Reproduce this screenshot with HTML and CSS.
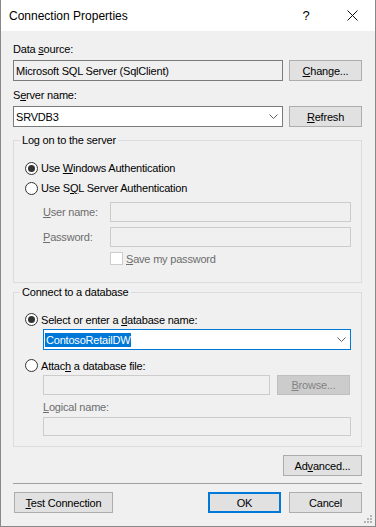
FILE: index.html
```html
<!DOCTYPE html>
<html lang="en">

<head>
    <meta charset="utf-8">
    <meta name="viewport" content="width=device-width, initial-scale=1.0">
    <title>Connection Properties</title>
    <link rel="stylesheet" href="styles.css">
</head>

<body>
    <div class="window">
        <div class="titlebar">
            <span class="title">Connection Properties</span>
            <span class="capbtn">?</span>
            <span class="capbtn">
                <svg width="11" height="11" viewBox="0 0 11 11">
                    <path d="M0.5 0.5 L10.5 10.5 M10.5 0.5 L0.5 10.5" stroke="#111" stroke-width="1" fill="none" />
                </svg>
            </span>
        </div>

        <div class="content">
            <label class="lbl">Data <u>s</u>ource:</label>
            <div class="row">
                <div class="textbox readonly">Microsoft SQL Server (SqlClient)</div>
                <button class="btn"><u>C</u>hange...</button>
            </div>

            <label class="lbl">S<u>e</u>rver name:</label>
            <div class="row">
                <div class="textbox combo">
                    <span class="value">SRVDB3</span>
                    <svg class="chev" width="9" height="5" viewBox="0 0 9 5">
                        <polyline points="0.5,0.5 4.5,4.5 8.5,0.5" stroke="#606060" fill="none" />
                    </svg>
                </div>
                <button class="btn"><u>R</u>efresh</button>
            </div>

            <fieldset class="group logon">
                <legend>Log on to the server</legend>
                <div class="opt first">
                    <span class="radio on"></span>
                    <span>Use <u>W</u>indows Authentication</span>
                </div>
                <div class="opt">
                    <span class="radio"></span>
                    <span>Use S<u>Q</u>L Server Authentication</span>
                </div>
                <div class="field">
                    <label class="dim"><u>U</u>ser name:</label>
                    <div class="textbox off"></div>
                </div>
                <div class="field pw">
                    <label class="dim"><u>P</u>assword:</label>
                    <div class="textbox off"></div>
                </div>
                <div class="check">
                    <span class="box"></span>
                    <span class="dim"><u>S</u>ave my password</span>
                </div>
            </fieldset>

            <fieldset class="group db">
                <legend>Connect to a database</legend>
                <div class="opt first">
                    <span class="radio on"></span>
                    <span>Select or enter a <u>d</u>atabase name:</span>
                </div>
                <div class="textbox combo focus">
                    <span class="sel">ContosoRetailDW</span>
                    <svg class="chev" width="9" height="5" viewBox="0 0 9 5">
                        <polyline points="0.5,0.5 4.5,4.5 8.5,0.5" stroke="#606060" fill="none" />
                    </svg>
                </div>
                <div class="opt attach">
                    <span class="radio"></span>
                    <span>Attac<u>h</u> a database file:</span>
                </div>
                <div class="filerow">
                    <div class="textbox off"></div>
                    <button class="btn disabled"><u>B</u>rowse...</button>
                </div>
                <label class="lbl dim logical"><u>L</u>ogical name:</label>
                <div class="textbox off logicalbox"></div>
            </fieldset>

            <button class="btn advanced">Ad<u>v</u>anced...</button>
            <div class="sep"></div>

            <div class="footer">
                <button class="btn test"><u>T</u>est Connection</button>
                <button class="btn ok">OK</button>
                <button class="btn">Cancel</button>
            </div>
        </div>

        <svg class="grip" width="9" height="9" viewBox="0 0 9 9">
            <rect x="6" y="0" width="2" height="2" fill="#b5b5b5" />
            <rect x="3" y="3" width="2" height="2" fill="#b5b5b5" />
            <rect x="6" y="3" width="2" height="2" fill="#b5b5b5" />
            <rect x="0" y="6" width="2" height="2" fill="#b5b5b5" />
            <rect x="3" y="6" width="2" height="2" fill="#b5b5b5" />
            <rect x="6" y="6" width="2" height="2" fill="#b5b5b5" />
        </svg>
    </div>
</body>

</html>
```

FILE: styles.css
```css
* {
    box-sizing: border-box;
}

body {
    margin: 0;
    font-family: "Liberation Sans", Arial, sans-serif;
    font-size: 11px;
    color: #000;
}

.window {
    position: relative;
    width: 376px;
    height: 527px;
    background: #f0f0f0;
    border: 1px solid #888;
    border-top: none;
}

.titlebar {
    height: 31px;
    background: #fff;
    display: flex;
    align-items: center;
    padding-left: 8px;
    font-size: 12px;
}

.title {
    flex: 1;
}

.capbtn {
    width: 46px;
    height: 31px;
    display: flex;
    align-items: center;
    justify-content: center;
    font-size: 13px;
}

.content {
    display: flex;
    flex-direction: column;
    padding: 11px 13px 0 12px;
    letter-spacing: -0.2px;
}

.lbl {
    display: block;
    line-height: 15px;
    margin-bottom: 3px;
}

.row {
    display: flex;
    gap: 6px;
    height: 21px;
}

.row + .lbl {
    margin-top: 7px;
}

.textbox {
    flex: 1;
    display: flex;
    align-items: center;
    padding-left: 2px;
    background: #fff;
    border: 1px solid #7a7a7a;
}

.textbox.readonly {
    background: #f0f0f0;
}

.textbox.off {
    background: #f0f0f0;
    border-color: #cccccc;
    height: 20px;
}

.combo .value {
    flex: 1;
}

.combo .chev {
    margin-right: 4px;
}

.btn {
    width: 73px;
    height: 21px;
    padding: 0;
    font: inherit;
    letter-spacing: inherit;
    color: #000;
    background: #e1e1e1;
    border: 1px solid #adadad;
    border-radius: 0;
}

.btn.disabled {
    background: #cccccc;
    border-color: #bfbfbf;
    color: #838383;
    height: 20px;
}

.group {
    margin: 6px 0 0;
    padding: 0 10px 16px 0;
    border: 1px solid #dcdcdc;
    min-width: 0;
}

.group legend {
    margin-left: 6px;
    padding: 0 2px;
    line-height: 15px;
}

.opt {
    display: flex;
    align-items: center;
    gap: 3px;
    height: 20px;
    margin-left: 11px;
}

.opt.first {
    margin-top: 10px;
}

.radio {
    width: 13px;
    height: 13px;
    border: 1px solid #333;
    border-radius: 50%;
    background: #fff;
    display: flex;
    align-items: center;
    justify-content: center;
}

.radio.on::after {
    content: "";
    width: 7px;
    height: 7px;
    border-radius: 50%;
    background: #333;
}

.dim {
    color: #6d6d6d;
}

.field {
    display: flex;
    align-items: center;
    margin: 4px 0 0 29px;
}

.field.pw {
    margin-top: 5px;
}

.field label {
    width: 67px;
}

.check {
    display: flex;
    align-items: center;
    gap: 3px;
    height: 15px;
    margin: 4px 0 0 96px;
}

.check .box {
    width: 13px;
    height: 13px;
    border: 1px solid #cccccc;
    background: #fff;
}

.group.db {
    margin-top: 2px;
    padding-bottom: 10px;
}

.group.db .opt.first {
    height: 19px;
}

.combo.focus {
    height: 21px;
    margin-left: 29px;
    padding-left: 1px;
    border-color: #0078d7;
}

.combo .sel {
    flex: 0 0 auto;
    margin-right: auto;
    padding: 0 1px;
    line-height: 14px;
    background: #0078d7;
    color: #fff;
}

.opt.attach {
    height: 19px;
    margin-top: 6px;
}

.filerow {
    display: flex;
    gap: 7px;
    margin: 0 1px 0 29px;
}

.lbl.logical {
    margin: 5px 0 2px 29px;
}

.logicalbox {
    margin-left: 29px;
    height: 19px !important;
    flex: none;
}

.advanced {
    align-self: flex-end;
    width: 79px;
    margin-top: 8px;
}

.sep {
    height: 1px;
    margin-top: 7px;
    background: #a0a0a0;
}

.footer {
    display: flex;
    gap: 8px;
    margin-top: 8px;
}

.btn.test {
    width: 99px;
    margin-left: 1px;
    margin-right: auto;
}

.btn.ok {
    border-color: #0078d7;
    box-shadow: inset 0 0 0 1px #0078d7;
}

.grip {
    position: absolute;
    right: 2px;
    bottom: 2px;
}
```
